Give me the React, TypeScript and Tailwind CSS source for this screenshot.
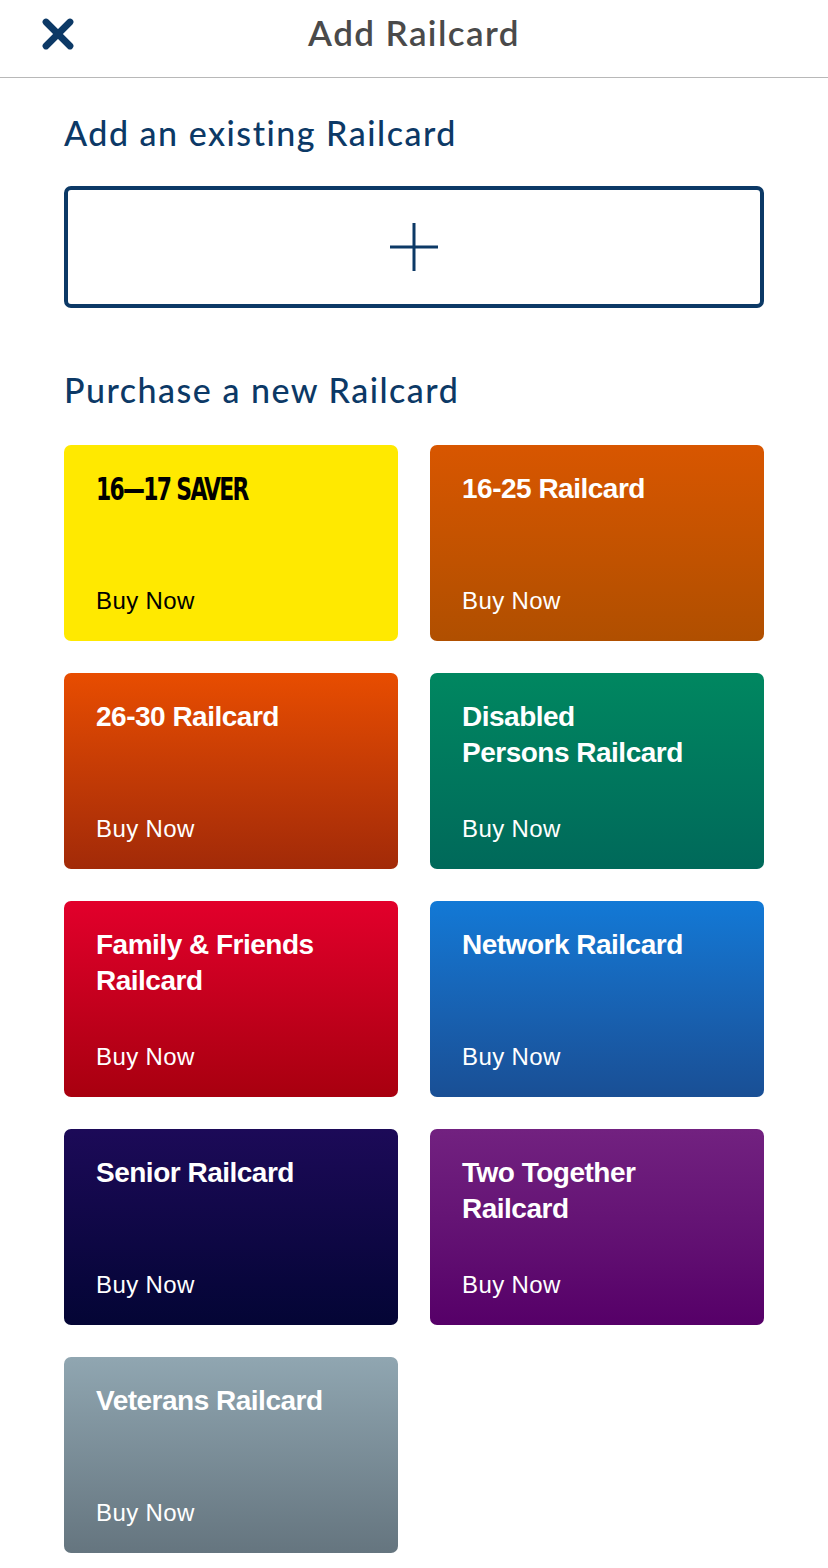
import { X } from "lucide-react";

type Card = {
  title: string[];
  bg: string;
  dark?: boolean;
  saver?: boolean;
};

const cards: Card[] = [
  { title: ["16—17 SAVER"], bg: "bg-[#ffe900]", dark: true, saver: true },
  { title: ["16-25 Railcard"], bg: "bg-gradient-to-b from-[#d85600] to-[#b04f00]" },
  { title: ["26-30 Railcard"], bg: "bg-gradient-to-b from-[#e84d00] to-[#a22a08]" },
  { title: ["Disabled", "Persons Railcard"], bg: "bg-gradient-to-b from-[#008760] to-[#00695a]" },
  { title: ["Family & Friends", "Railcard"], bg: "bg-gradient-to-b from-[#e2002b] to-[#a8000f]" },
  { title: ["Network Railcard"], bg: "bg-gradient-to-b from-[#1279d6] to-[#194f95]" },
  { title: ["Senior Railcard"], bg: "bg-gradient-to-b from-[#1c0a58] to-[#040535]" },
  { title: ["Two Together", "Railcard"], bg: "bg-gradient-to-b from-[#722180] to-[#560068]" },
  { title: ["Veterans Railcard"], bg: "bg-gradient-to-b from-[#90a6b1] to-[#65757f]" },
];

function RailcardTile({ card }: { card: Card }) {
  return (
    <button
      className={`${card.bg} h-[196px] rounded-[7px] pl-8 pr-4 pt-[26px] pb-[25px] flex flex-col justify-between items-start text-left ${
        card.dark ? "text-black" : "text-white"
      }`}
    >
      {card.saver ? (
        <span className="inline-block font-['DejaVu_Sans_Condensed',sans-serif] font-bold text-[32px] leading-[36px] tracking-[-2.2px] scale-x-[0.76] origin-left whitespace-nowrap">
          {card.title[0]}
        </span>
      ) : (
        <span className="font-['Liberation_Sans',sans-serif] font-bold text-[28px] leading-[36px] tracking-[-0.5px]">
          {card.title.map((line) => (
            <span key={line} className="block">
              {line}
            </span>
          ))}
        </span>
      )}
      <span className="font-['Liberation_Sans',sans-serif] text-[24px] leading-[30px] tracking-[0.4px]">
        Buy Now
      </span>
    </button>
  );
}

export default function App() {
  return (
    <div className="w-[828px] min-h-[1568px] bg-white font-['Lato',sans-serif]">
      {/* header */}
      <div className="relative h-[78px] border-b border-b-[#b8b8b8] flex items-center justify-center">
        <button className="absolute left-[34px] top-[10px] text-[#0c3966]">
          <X size={48} strokeWidth={3.4} />
        </button>
        <h1 className="text-[35px] font-semibold tracking-[1.4px] text-[#4a4a4a] -mt-[12px]">
          Add Railcard
        </h1>
      </div>

      <div className="px-16">
        <h2 className="mt-[33px] text-[34px] font-medium tracking-[1.5px] text-[#0c3966] leading-[44px]">
          Add an existing Railcard
        </h2>
        <button className="mt-[31px] w-full h-[122px] border-4 border-[#0c3966] rounded-[7px] flex items-center justify-center text-[#0c3966]">
          <svg width="48" height="48" viewBox="0 0 48 48" fill="none" stroke="currentColor" strokeWidth="3">
            <path d="M24 0v48M0 24h48" />
          </svg>
        </button>

        <h2 className="mt-[60px] text-[34px] font-medium tracking-[1.5px] text-[#0c3966] leading-[44px]">
          Purchase a new Railcard
        </h2>

        <div className="mt-[33px] grid grid-cols-2 gap-x-8 gap-y-8 pb-4">
          {cards.map((c) => (
            <RailcardTile key={c.title.join(" ")} card={c} />
          ))}
        </div>
      </div>
    </div>
  );
}
